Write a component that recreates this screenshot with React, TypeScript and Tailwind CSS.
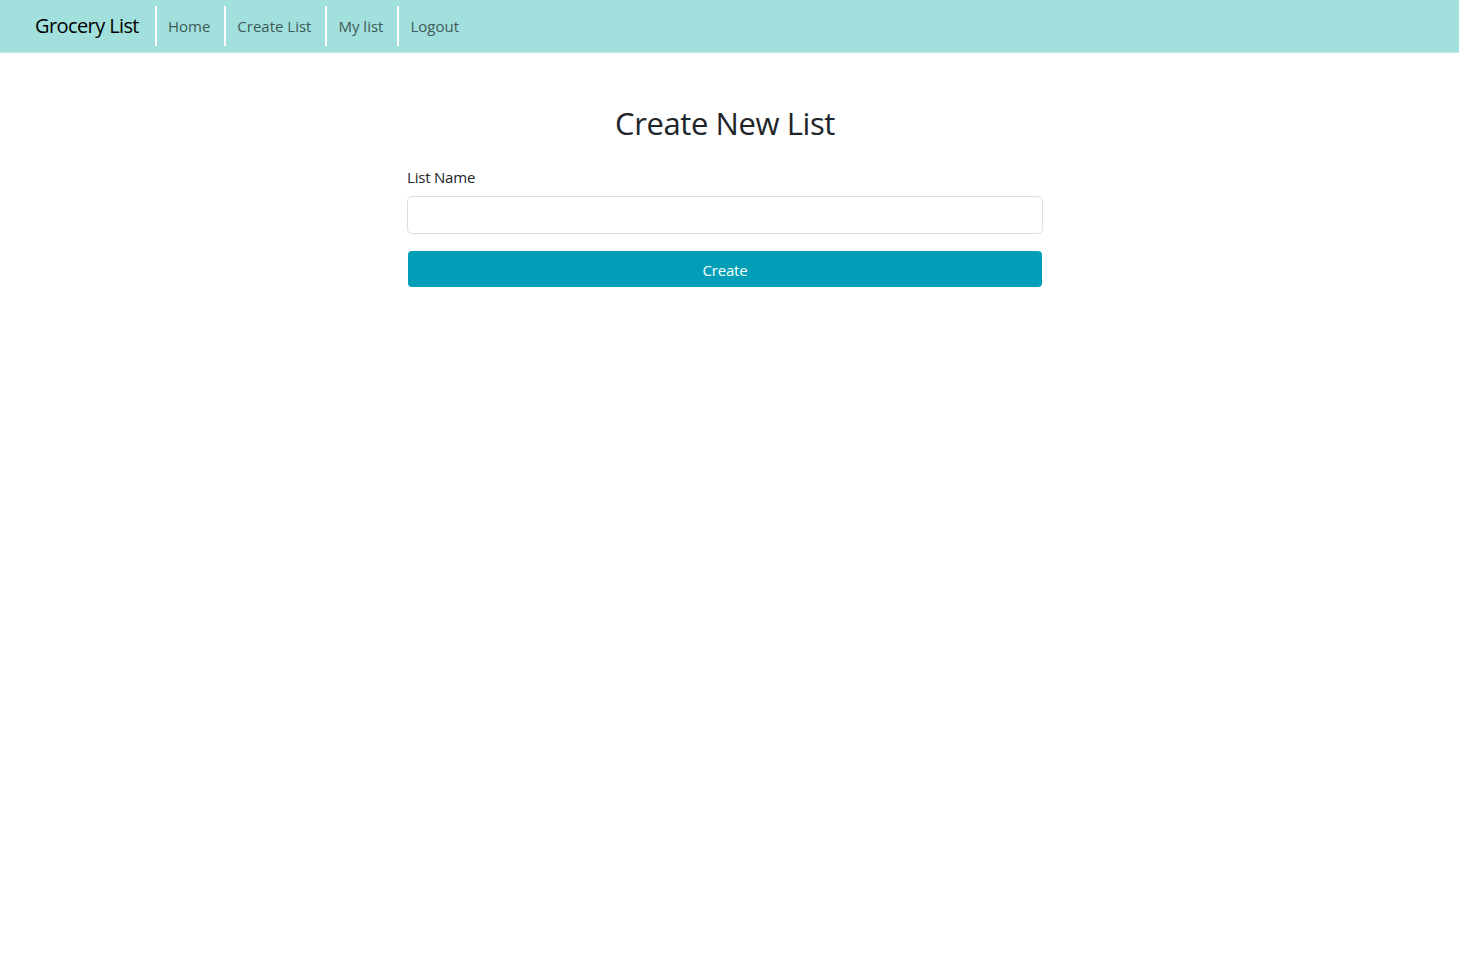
import React from "react";

export default function App() {
  const font = { fontFamily: '"Open Sans", "Noto Sans", sans-serif' };
  return (
    <div className="min-h-screen bg-white text-[#212529]" style={font}>
      <nav className="h-[53px] bg-[#a1e0dc] border-b border-[#c6ecea] flex items-center pl-[35px]">
        <span className="text-[20px] text-black mr-[16px] tracking-[-0.6px]">Grocery List</span>
        <div className="flex h-[40px] -mt-[1px]">
          {["Home", "Create List", "My list", "Logout"].map((l) => (
            <div key={l} className="border-l-2 border-white flex items-center pt-[1px] pl-[11px] pr-[14px] text-[15px] text-[#3f5a58]">
              {l}
            </div>
          ))}
        </div>
      </nav>
      <div className="w-[1450px]">
        <main className="w-[636px] mx-auto pt-[50px]">
          <h2 className="text-center text-[31px] leading-[40px] text-[#212529] tracking-[-0.4px]">Create New List</h2>
          <form className="mt-[22px]" onSubmit={(e) => e.preventDefault()}>
            <label className="block text-[15px] leading-[24px] text-[#212529] mb-[7px] tracking-[-0.2px]">List Name</label>
            <input className="block w-full h-[38px] border border-[#dcdfe2] rounded-[5px] px-3 outline-none" />
            <button className="mt-[17px] w-[634px] mx-auto block h-[36px] pt-[3px] rounded-[4px] bg-[#009fb7] text-white text-[15px] tracking-[-0.2px]">
              Create
            </button>
          </form>
        </main>
      </div>
    </div>
  );
}
